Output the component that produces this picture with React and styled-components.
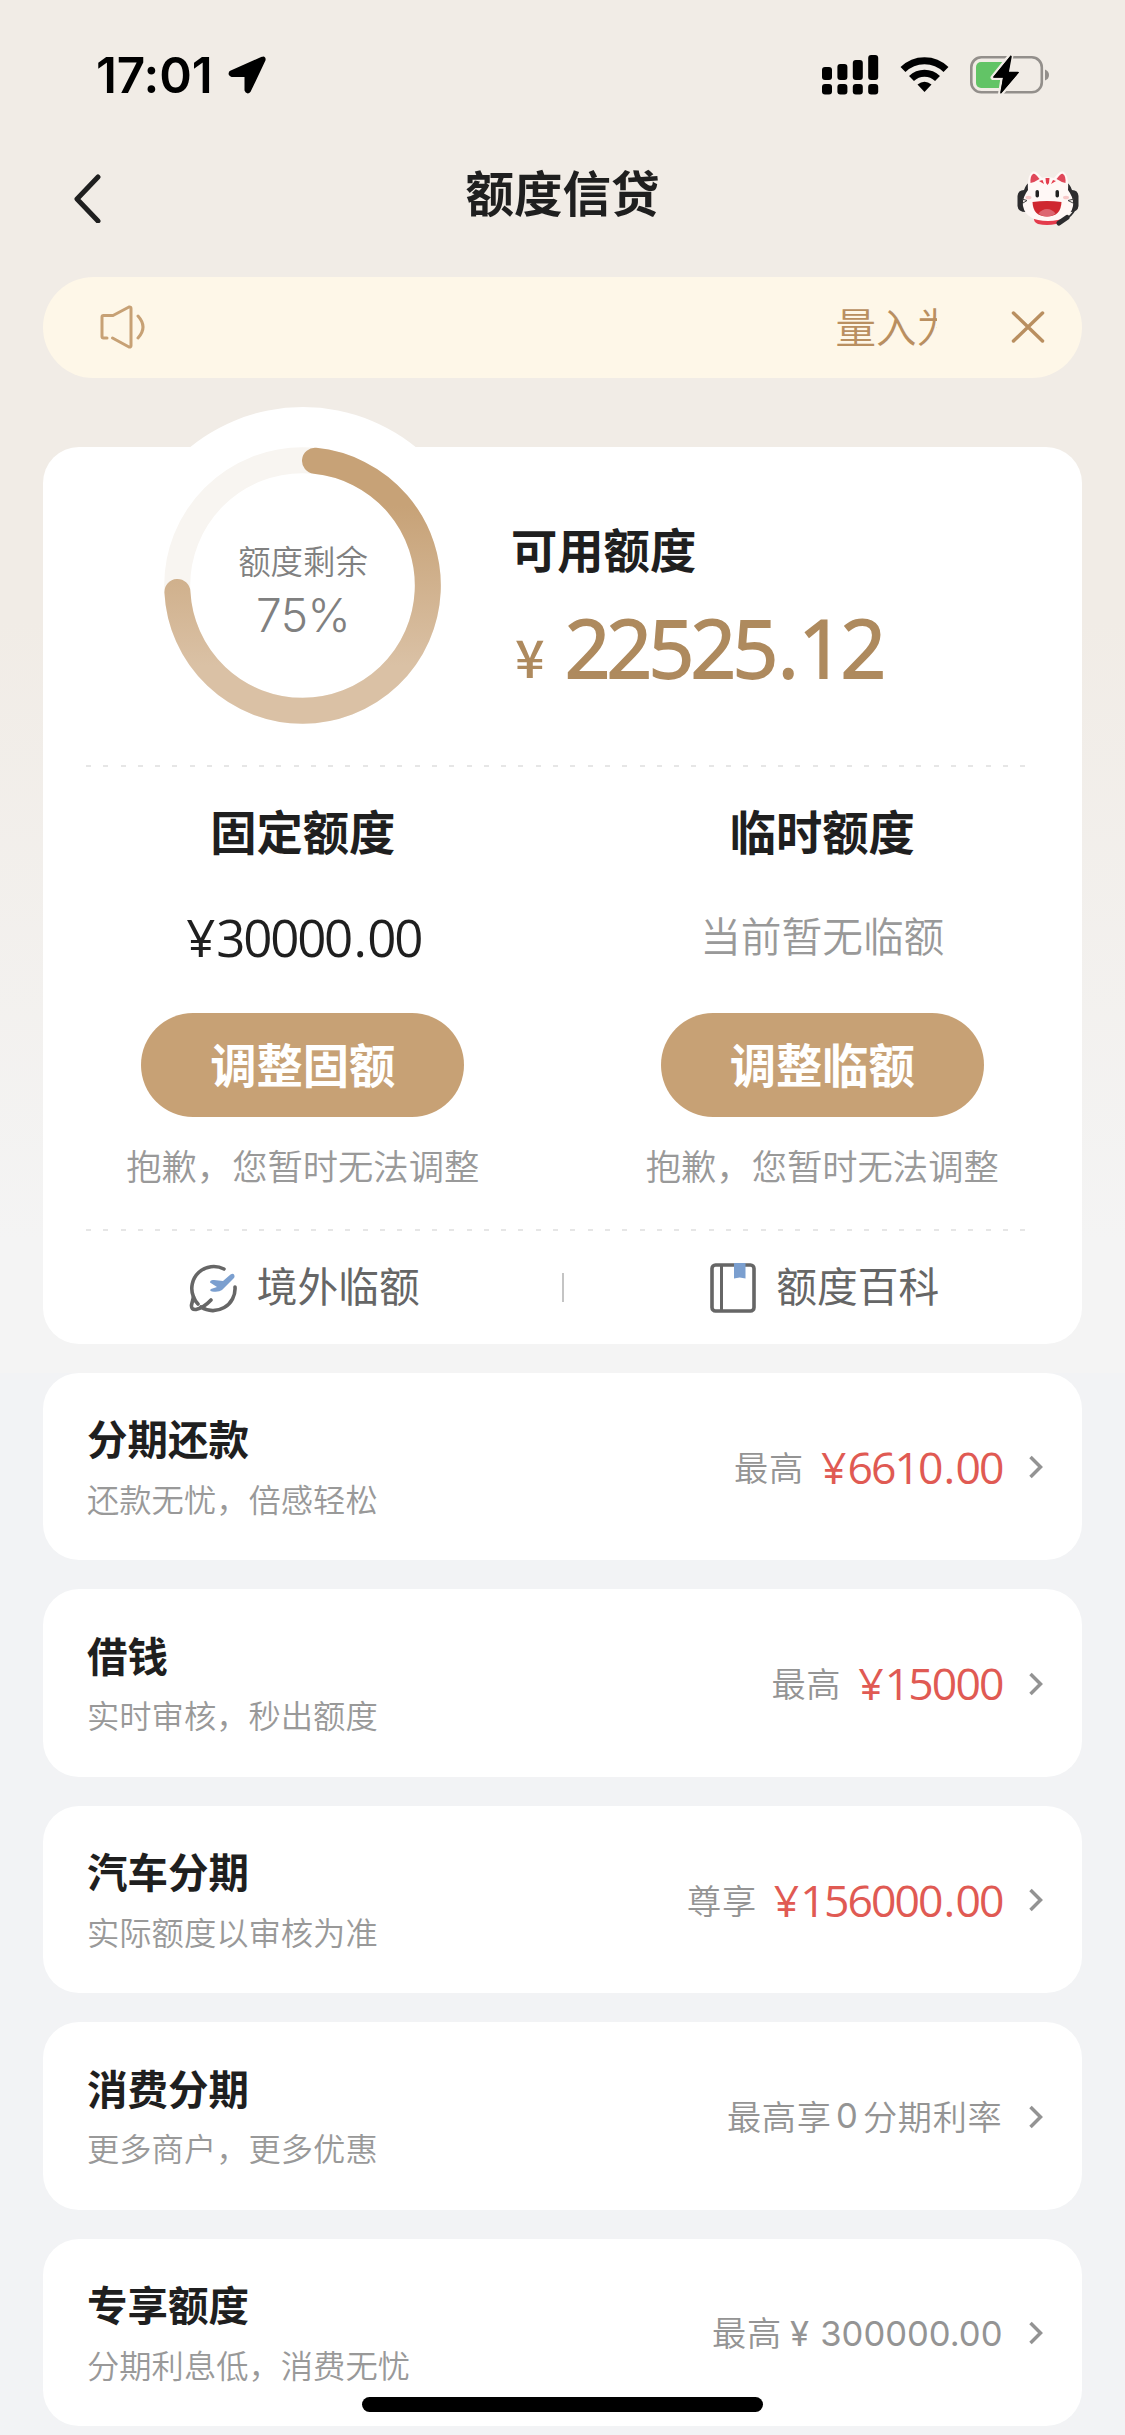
import React from 'react';
import styled, { createGlobalStyle } from 'styled-components';

const GlobalStyle = createGlobalStyle`
  * {
    box-sizing: border-box;
  }
  body {
    margin: 0;
    background: #f2f3f5;
    font-family: "Noto Sans CJK SC", sans-serif;
    color: #1f1f1f;
  }
`;

const Page = styled.div`
  position: relative;
  display: flex;
  flex-direction: column;
  width: 1125px;
  height: 2435px;
  padding: 0 43px;
  overflow: hidden;
  background: linear-gradient(#f1ece6 0, #f1ece6 620px, #f4f4f4 1240px, #f4f4f4 1373px, #f2f3f5 1373px);
`;

const StatusBar = styled.div`
  display: flex;
  justify-content: space-between;
  align-items: center;
  height: 150px;
  padding: 0 32.5px 0 53px;
  color: #000;
`;

const Time = styled.div`
  display: flex;
  align-items: center;
  gap: 15px;
  font: 600 49.5px/60px Inter, sans-serif;
  letter-spacing: -0.1px;
`;

const StatusIcons = styled.div`
  display: flex;
  align-items: center;
  gap: 21px;
`;

const NavBar = styled.div`
  display: flex;
  justify-content: space-between;
  align-items: center;
  height: 96px;
  padding: 0 2px 0 29px;
`;

const NavTitle = styled.h1`
  margin: 0 0 0 7px;
  padding-bottom: 15px;
  font-size: 48.5px;
  line-height: 60px;
  font-weight: 700;
`;

const Notice = styled.div`
  display: flex;
  align-items: center;
  height: 101px;
  margin-top: 30.5px;
  padding: 0 36px 0 55px;
  border-radius: 51px;
  background: #fef7e8;
`;

const Marquee = styled.div`
  width: 103px;
  margin-left: auto;
  margin-right: 73px;
  padding: 0 0 3px 1.5px;
  overflow: hidden;
  white-space: nowrap;
  font-size: 40.5px;
  line-height: 60px;
  font-weight: 350;
  color: #b98f60;
`;

const Card = styled.div`
  flex: none;
  border-radius: 36px;
  background: #fff;
`;

const LimitCard = styled(Card)`
  height: 897px;
  margin-top: 69.5px;
`;

const Summary = styled.div`
  display: flex;
  height: 318px;
  padding-left: 81px;
`;

const Gauge = styled.div`
  display: grid;
  place-items: center;
  width: 358px;
  height: 358px;
  margin-top: -40.5px;
  border-radius: 50%;
  background: #fff;

  & > * {
    grid-area: 1 / 1;
  }
`;

const GaugeLabel = styled.div`
  display: flex;
  flex-direction: column;
  align-items: center;
  padding-top: 10px;
  color: #808080;
  font-size: 32.4px;
  line-height: 44px;
  font-weight: 350;

  b {
    margin-top: 5px;
    font: 350 46px/56px Inter, sans-serif;
    letter-spacing: -0.5px;
  }
`;

const Available = styled.div`
  padding: 71px 0 0 29px;
`;

const Heading = styled.div`
  font-size: 46.3px;
  line-height: 60px;
  font-weight: 700;
`;

const Digits = styled.span`
  font-family: "Open Sans", sans-serif;

  i {
    font-style: normal;
    margin: 0 ${(p) => p.$gap}px;
  }
`;

const Amount = styled.div`
  display: flex;
  align-items: baseline;
  margin-top: 24px;
  font: 400 80px/90px "Open Sans", sans-serif;
  letter-spacing: -3.8px;
  color: #ae8a5e;
  -webkit-text-stroke: 1.8px #ae8a5e;

  small {
    margin: 0 20px 0 4px;
    font: 500 52px "Noto Sans CJK SC", sans-serif;
    line-height: 1;
    letter-spacing: 0;
    -webkit-text-stroke: 0;
  }
`;

const Dashes = styled.div`
  height: 2px;
  margin: 0 54px 0 43px;
  background: repeating-linear-gradient(90deg, #e6e6e6 0 5px, transparent 5px 17.3px);
`;

const Columns = styled.div`
  display: grid;
  grid-template-columns: 1fr 1fr;
  height: 462px;
`;

const Column = styled.div`
  display: flex;
  flex-direction: column;
  align-items: center;
  padding-top: 33px;
`;

const Value = styled.div`
  height: 60px;
  margin-top: 45px;
  line-height: 60px;
  font-size: 40.7px;
  font-weight: 350;
  color: #999;
`;

const FixedValue = styled(Value)`
  padding-left: 2px;
  font-size: 51px;
  font-weight: 400;
  letter-spacing: -2.2px;
  color: #1f1f1f;
`;

const Pill = styled.button`
  width: 323px;
  height: 104px;
  margin-top: 47.5px;
  padding: 0 0 4px;
  border: none;
  border-radius: 52px;
  background: #c7a175;
  color: #fff;
  font: 700 46.3px/60px "Noto Sans CJK SC", sans-serif;
`;

const Hint = styled.div`
  margin-top: 26px;
  font-size: 35.3px;
  line-height: 44px;
  font-weight: 350;
  color: #999;
`;

const Links = styled.div`
  display: flex;
  align-items: center;
  height: 113px;
`;

const Link = styled.div`
  display: flex;
  flex: 1;
  justify-content: center;
  align-items: center;
  gap: 20px;
  padding-left: 4px;
  font-size: 40.7px;
  line-height: 60px;
  color: #666;

  span {
    padding-bottom: 6px;
  }
`;

const Divider = styled.div`
  width: 2px;
  height: 29px;
  background: #c4c4c4;
`;

const Row = styled(Card)`
  display: flex;
  justify-content: space-between;
  align-items: center;
  height: 187.7px;
  margin-top: 28.8px;
  padding: 0 39.5px 2px 44px;
`;

const RowTitle = styled.div`
  font-size: 40.5px;
  line-height: 54px;
  font-weight: 700;
`;

const RowNote = styled.div`
  margin-top: 10.5px;
  font-size: 32.3px;
  line-height: 44px;
  font-weight: 350;
  color: #999;
`;

const RowSide = styled.div`
  display: flex;
  align-items: center;
  font-size: 34.2px;
  line-height: 50px;
  font-weight: 350;
  letter-spacing: 0.7px;
  color: #949494;

  svg {
    margin: 3px 0 0 26px;
  }
`;

const Plain = styled.span`
  margin-left: ${(p) => p.$before || 0}px;
  margin-right: ${(p) => p.$after || 0}px;
  font: 400 34.6px/50px Inter, sans-serif;
  letter-spacing: 0;
`;

const Price = styled.span`
  margin-left: 17px;
  font-size: 44.5px;
  font-weight: 400;
  letter-spacing: -1.9px;
  color: #e05a53;
`;

const Yen = styled.span`
  margin-right: 3px;
`;

const HomeBar = styled.div`
  position: absolute;
  left: 362px;
  bottom: 23px;
  width: 401px;
  height: 15px;
  border-radius: 8px;
  background: #000;
`;

const LocationArrow = () => (
  <svg width="38" height="38" viewBox="0 0 38 38">
    <path d="M34.500 2.700L3 16.500Q1.800 18.500 4 19H18.500V34Q19.500 36.500 21 34.500L35.500 4Q36 2 34.500 2.700Z" stroke="#000" strokeWidth="4" strokeLinejoin="round" />
  </svg>
);

const Signal = () => (
  <svg width="57" height="40" viewBox="0 0 57 40">
    {[12, 9, 5, 0].map((y, i) => (
      <g key={y}>
        <rect x={i * 15.4} y={y} width="10" height={25 - y} rx="3" />
        <rect x={i * 15.4} y="29" width="10" height="10.500" rx="3" />
      </g>
    ))}
  </svg>
);

const Wifi = () => (
  <svg width="49" height="38" viewBox="0 0 49 38" fill="none" stroke="#000" strokeWidth="7">
    <path d="M3 13.500A30.500 30.500 0 0 1 46 13.500" />
    <path d="M11.500 22.500A18.500 18.500 0 0 1 37.500 22.500" />
    <path d="M17.500 28.500Q24.500 23 31.500 28.500L24.500 36Z" fill="#000" stroke="none" />
  </svg>
);

const Battery = () => (
  <svg width="80" height="42" viewBox="0 0 80 42">
    <rect x="1.300" y="3.300" width="70.500" height="35" rx="10" fill="none" stroke="#938f8b" strokeWidth="2.600" />
    <path d="M75 15.500Q79 17 79 21T75 26.500Z" fill="#938f8b" />
    <rect x="6" y="8" width="33" height="26" rx="5" fill="#62c466" />
    <path d="M41 1L23 23.500H33L30.500 40L49 18H38.500Z" fill="#000" stroke="#f1ece6" strokeWidth="5" strokeLinejoin="round" paintOrder="stroke" />
    <path d="M41 2.500L24 23H34L31 38.500L48 18.500H38Z" stroke="#000" strokeWidth="1.500" strokeLinejoin="round" />
  </svg>
);

const Back = () => (
  <svg width="30" height="50" viewBox="0 0 30 50" fill="none" stroke="#1f1f1f" strokeWidth="5" strokeLinecap="round" strokeLinejoin="round">
    <path d="M26 4L5 26L26 48" />
  </svg>
);

const Mascot = () => (
  <svg width="64" height="56" viewBox="0 0 64 56">
    <path d="M8 20Q10 14 14 12V40L10 42Q2 42 1.500 36V26Q2 20 8 20Z" fill="#2c2c2e" />
    <path d="M56 20Q54 14 50 12V40L54 42Q62 42 62.500 36V26Q62 20 56 20Z" fill="#2c2c2e" />
    <path d="M18 47H44Q46 53 40 54Q31 56 22 54Q17 52 18 47Z" fill="#e43b4c" />
    <path d="M12 20Q11 6 16 2Q19 -1 26 8Q31 6.500 38 8Q45 -1 48 2Q53 6 52 20Q58 28 57 36Q54 51 32 51Q10 51 7 36Q6 28 12 20Z" fill="#fff8f6" />
    <path d="M14.500 13Q14 6 17 4Q19 3 23.500 9Q19 12 14.500 13Z" fill="#e0485a" />
    <path d="M49.500 13Q50 6 47 4Q45 3 40.500 9Q45 12 49.500 13Z" fill="#e0485a" />
    <path d="M29.500 8H33.500L33 13L31.500 15L30 13ZM23 11L26.500 10L28 14ZM40 11L37 10L35 14Z" fill="#e43b4c" />
    <rect x="19.500" y="20" width="3.500" height="7.500" rx="1.700" fill="#222" />
    <rect x="39.500" y="20" width="3.500" height="7.500" rx="1.700" fill="#222" />
    <ellipse cx="12.500" cy="27.500" rx="3" ry="1.800" fill="#f8c8c8" />
    <ellipse cx="50" cy="27.500" rx="3" ry="1.800" fill="#f8c8c8" />
    <path d="M6 29L11 30.500L7 33M58 29L52 30.500L57 33" fill="none" stroke="#444" />
    <path d="M16.500 32Q31 30 45.500 32Q45 46.500 31 46.500Q17 46.500 16.500 32Z" fill="#cf2830" />
    <path d="M22.500 43.500Q26 39 31 39T39.500 43.500Q36 46.500 31 46.500T22.500 43.500Z" fill="#dd6671" />
    <path d="M59 39Q56 46 48 50" fill="none" stroke="#2c2c2e" strokeWidth="1.800" />
    <path d="M51 47.500L43 53" stroke="#2c2c2e" strokeWidth="5" strokeLinecap="round" />
  </svg>
);

const Speaker = () => (
  <svg width="48" height="46" viewBox="0 0 48 46" fill="none" stroke="#c7a175" strokeWidth="3" strokeLinecap="round" strokeLinejoin="round">
    <path d="M9 34H5.500Q4 34 4 32.500V13Q4 11.500 5.500 11.500H15L31 3Q33 2.500 33 4.500V41.500Q33 43.500 31 43L14.500 34" />
    <path d="M40 12Q50 23 40 34" />
  </svg>
);

const Close = () => (
  <svg width="36" height="34" viewBox="0 0 36 34" stroke="#b98f60" strokeWidth="3.500" strokeLinecap="round">
    <path d="M3.500 3L32.500 31M32.500 3L3.500 31" />
  </svg>
);

const Ring = () => (
  <svg width="278" height="278" viewBox="-138.500 -138.500 278 278" fill="none" strokeWidth="26">
    <defs>
      <linearGradient id="gold" gradientUnits="userSpaceOnUse" x1="0" y1="-80" x2="0" y2="80">
        <stop offset="0" stopColor="#c7a277" />
        <stop offset="1" stopColor="#dac1a5" />
      </linearGradient>
    </defs>
    <circle r="125.300" stroke="#f8f5f1" />
    <path d="M12.500 -124.700A125.300 125.300 0 1 1 -125.100 6.500" stroke="url(#gold)" strokeLinecap="round" />
  </svg>
);

const Abroad = () => (
  <svg width="48" height="50" viewBox="0 0 48 50" fill="none" stroke="#666" strokeWidth="3.600" strokeLinecap="round" strokeLinejoin="round">
    <path d="M35 6A22 22 0 0 0 4.500 34L2.500 42Q2 47 7 46.500Q15 44.500 22 37" />
    <path d="M4.500 34Q6 38 9 41M12 44A22 22 0 0 0 46 24" />
    <path d="M45 11.500Q46.500 14 44 16L33 27Q30 29.500 23 28.500Q20 27.500 22 26L28 24L21 19.500Q21 16.500 25 17L34 18L41.500 11.500Q44 10 45 11.500Z" fill="#7b9fcf" stroke="none" />
  </svg>
);

const Book = () => (
  <svg width="46" height="50" viewBox="0 0 46 50" fill="none" stroke="#666" strokeWidth="3.600">
    <rect x="2" y="2" width="42" height="46" rx="3.500" />
    <path d="M11.500 2V48" strokeWidth="3" />
    <path d="M24 0H35.500V15.500L29.700 14.500L24 15.500Z" fill="#7b9fcf" stroke="none" />
  </svg>
);

const Chevron = () => (
  <svg width="14" height="24" viewBox="0 0 14 24" fill="none" stroke="#939393" strokeWidth="3.500">
    <path d="M1.500 2L11.500 12L1.500 22" />
  </svg>
);

// the decimal point gets a little air on both sides
const Money = ({ value, gap, yen }) => {
  const [whole, cents] = value.split('.');
  return (
    <Digits $gap={gap}>
      {yen && <Yen>¥</Yen>}
      {whole}
      {cents && <i>.</i>}
      {cents}
    </Digits>
  );
};

const rows = [
  { title: '分期还款', note: '还款无忧，倍感轻松', label: '最高', price: '6610.00' },
  { title: '借钱', note: '实时审核，秒出额度', label: '最高', price: '15000' },
  { title: '汽车分期', note: '实际额度以审核为准', label: '尊享', price: '156000.00' },
  { title: '消费分期', note: '更多商户，更多优惠', label: <>最高享<Plain $before={4.5} $after={5}>0</Plain>分期利率</> },
  { title: '专享额度', note: '分期利息低，消费无忧', label: <span>最高<Plain $before={8} $after={3}>¥</Plain> <Plain>300000.00</Plain></span> },
];

function App() {
  return (
    <Page>
      <GlobalStyle />
      <StatusBar>
        <Time>
          17:01
          <LocationArrow />
        </Time>
        <StatusIcons>
          <Signal />
          <Wifi />
          <Battery />
        </StatusIcons>
      </StatusBar>
      <NavBar>
        <Back />
        <NavTitle>额度信贷</NavTitle>
        <Mascot />
      </NavBar>
      <Notice>
        <Speaker />
        <Marquee>量入为出</Marquee>
        <Close />
      </Notice>

      <LimitCard>
        <Summary>
          <Gauge>
            <Ring />
            <GaugeLabel>
              额度剩余
              <b>75%</b>
            </GaugeLabel>
          </Gauge>
          <Available>
            <Heading>可用额度</Heading>
            <Amount>
              <small>¥</small>
              <Money value="22525.12" gap={3.5} />
            </Amount>
          </Available>
        </Summary>
        <Dashes />
        <Columns>
          <Column>
            <Heading>固定额度</Heading>
            <FixedValue>
              <Money yen value="30000.00" gap={2.5} />
            </FixedValue>
            <Pill>调整固额</Pill>
            <Hint>抱歉，您暂时无法调整</Hint>
          </Column>
          <Column>
            <Heading>临时额度</Heading>
            <Value>当前暂无临额</Value>
            <Pill>调整临额</Pill>
            <Hint>抱歉，您暂时无法调整</Hint>
          </Column>
        </Columns>
        <Dashes />
        <Links>
          <Link>
            <Abroad />
            <span>境外临额</span>
          </Link>
          <Divider />
          <Link>
            <Book />
            <span>额度百科</span>
          </Link>
        </Links>
      </LimitCard>

      {rows.map((row) => (
        <Row key={row.title}>
          <div>
            <RowTitle>{row.title}</RowTitle>
            <RowNote>{row.note}</RowNote>
          </div>
          <RowSide>
            {row.label}
            {row.price && (
              <Price>
                <Money yen value={row.price} gap={2} />
              </Price>
            )}
            <Chevron />
          </RowSide>
        </Row>
      ))}
      <HomeBar />
    </Page>
  );
}

export default App;
